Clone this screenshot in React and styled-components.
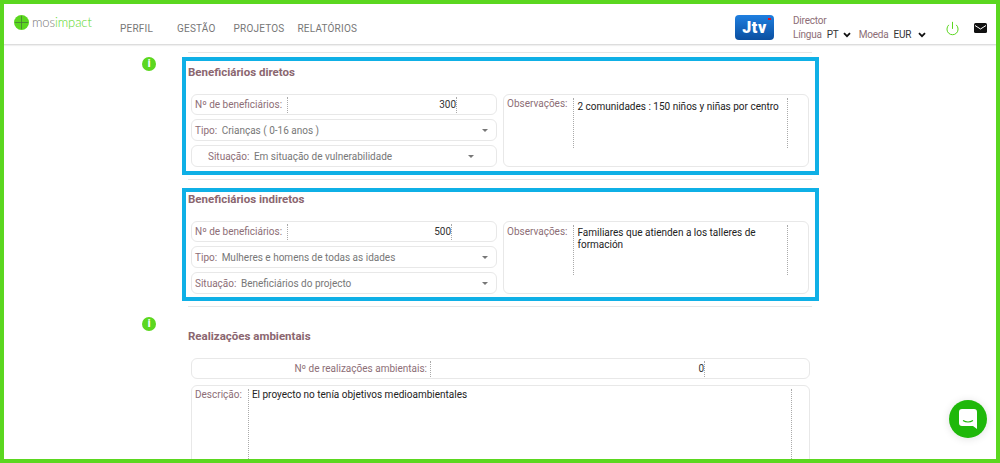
import React from "react";
import styled, { createGlobalStyle } from "styled-components";
import { Power } from "lucide-react";

const GlobalStyle = createGlobalStyle`
  html, body {
    margin: 0;
    background: #fff;
  }
  * {
    box-sizing: border-box;
  }
`;

const Frame = styled.div`
  position: relative;
  width: 1000px;
  height: 463px;
  border: 4px solid #5bd71f;
  overflow: hidden;
  font-family: Roboto, "Liberation Sans", sans-serif;
  font-size: 10px;
  color: #8d6e76;
`;

const Header = styled.header`
  display: flex;
  align-items: flex-start;
  height: 41px;
  border-bottom: 1px solid #ddd;
  box-shadow: 0 1px 1px rgba(0, 0, 0, 0.06);
`;

const Logo = styled.div`
  display: flex;
  align-items: center;
  gap: 3px;
  width: 116px;
  padding: 11px 0 0 10px;
`;

const LogoText = styled.span`
  font-family: Lato, sans-serif;
  font-weight: 300;
  font-size: 13px;
  letter-spacing: -0.1px;
  line-height: 15px;
  color: #777;
  b {
    font-weight: 300;
    color: #5bd71f;
  }
`;

const Nav = styled.nav`
  display: flex;
  padding-top: 18px;
`;

const NavItem = styled.a`
  font-size: 10px;
  line-height: 14px;
  letter-spacing: 0.2px;
  color: #777;
  margin-right: ${(p) => p.$gap}px;
`;

const Tools = styled.div`
  display: flex;
  align-items: flex-start;
  margin-left: auto;
`;

const JtvBadge = styled.div`
  position: relative;
  width: 39px;
  height: 25px;
  margin-top: 11px;
  margin-right: 19px;
  border-radius: 4px;
  background: linear-gradient(#1f7fe0, #0a4fa0);
  color: #fff;
  font-weight: 900;
  font-size: 16px;
  line-height: 26px;
  text-align: center;
  letter-spacing: 0.6px;
  &::after {
    content: "";
    position: absolute;
    top: 3px;
    right: 3px;
    width: 3px;
    height: 2px;
    background: #e01020;
  }
`;

const UserBox = styled.div`
  width: 151px;
  padding-top: 10px;
  line-height: 14px;
`;

const UserRow = styled.div`
  display: flex;
  align-items: center;
  height: 14px;
  letter-spacing: -0.2px;
`;

const Value = styled.span`
  color: #333;
  margin-left: ${(p) => p.$left}px;
`;

const Chevron = styled.svg`
  width: 8px;
  height: 6px;
  margin-left: ${(p) => p.$left}px;
  margin-right: ${(p) => p.$right || 0}px;
  fill: none;
  stroke: #111;
  stroke-width: 1.8;
`;

const PowerIcon = styled(Power)`
  width: 15px;
  height: 15px;
  margin: 17px 0 0 1px;
  color: #5bd71f;
`;

const MailIcon = styled.svg`
  width: 13px;
  height: 10px;
  margin: 18.5px 9px 0 14px;
`;

const Main = styled.main`
  padding-top: 7px;
`;

const Rule = styled.hr`
  width: 624px;
  height: 1px;
  margin: ${(p) => p.$top || 0}px 0 ${(p) => p.$bottom}px 184px;
  border: 0;
  background: #e6e6e6;
`;

const Row = styled.div`
  display: flex;
  align-items: flex-start;
  padding-left: 138px;
`;

const InfoBadge = styled.span`
  flex: none;
  width: 14px;
  height: 14px;
  margin-right: 26px;
  border-radius: 50%;
  background: #5bd71f;
  color: #fff;
  font-size: 10px;
  font-weight: 900;
  line-height: 14px;
  text-align: center;
`;

const Spacer = styled.span`
  flex: none;
  width: 40px;
`;

const Card = styled.section`
  width: 637px;
  height: ${(p) => p.$height}px;
  border: 4px solid #0fb0e6;
  padding: ${(p) => p.$pad}px 5px 0 2px;
`;

const Plain = styled.section`
  width: 637px;
  padding: 12px 5px 0 6px;
`;

const Title = styled.h3`
  margin: 0;
  font-size: 11.5px;
  line-height: 14px;
  font-weight: 700;
  color: #8b666f;
  height: ${(p) => p.$height}px;
`;

const Columns = styled.div`
  display: flex;
  gap: 6px;
  padding-left: 3px;
`;

const Stack = styled.div`
  display: flex;
  flex-direction: column;
  gap: 4px;
  width: 306px;
`;

const Field = styled.div`
  display: flex;
  align-items: center;
  height: ${(p) => p.$height || 22}px;
  padding: 0 3px;
  border: 1px solid #e8e8e8;
  border-radius: 6px;
  background: #fff;
`;

const Label = styled.span`
  white-space: nowrap;
  padding-left: ${(p) => p.$left || 0}px;
  padding-top: ${(p) => p.$top || 0}px;
`;

const NumberCell = styled.div`
  margin-left: ${(p) => p.$left}px;
  width: ${(p) => p.$width}px;
  height: 16px;
  line-height: 16px;
  text-align: right;
  color: #333;
  border-left: 1px dotted #aaa;
  border-right: 1px dotted #aaa;
`;

const SelectValue = styled.span`
  flex: 1;
  margin-left: 4.5px;
  color: #777;
  white-space: nowrap;
`;

const Caret = styled.i`
  width: 0;
  height: 0;
  margin-right: ${(p) => p.$right}px;
  border-left: 3px solid transparent;
  border-right: 3px solid transparent;
  border-top: 3px solid #777;
`;

const NoteBox = styled.div`
  display: flex;
  align-items: flex-start;
  width: 306px;
  height: 73px;
  padding: 3px 0 0 3px;
  border: 1px solid #e8e8e8;
  border-radius: 6px;
`;

const NoteText = styled.div`
  width: 215px;
  height: 50px;
  margin-left: 6px;
  padding: ${(p) => p.$top}px 0 0 3px;
  border-left: 1px dotted #aaa;
  border-right: 1px dotted #aaa;
  line-height: 12px;
  color: #222;
`;

const WideField = styled(Field)`
  width: 619px;
  margin-left: 3px;
  padding: 0;
  justify-content: flex-start;
`;

const WideLabel = styled.span`
  width: 235px;
  text-align: right;
`;

const DescBox = styled.div`
  display: flex;
  align-items: flex-start;
  width: 619px;
  height: 90px;
  margin: 6px 0 0 3px;
  padding: 3px 0 0 3px;
  border: 1px solid #e8e8e8;
  border-radius: 6px;
`;

const DescText = styled.div`
  width: 544px;
  height: 90px;
  margin-left: 6px;
  padding-left: 3px;
  border-left: 1px dotted #aaa;
  border-right: 1px dotted #aaa;
  line-height: 12px;
  color: #222;
`;

const ChatButton = styled.button`
  position: absolute;
  right: 9px;
  bottom: 21px;
  display: flex;
  align-items: center;
  justify-content: center;
  width: 38px;
  height: 38px;
  padding: 0;
  border: 0;
  border-radius: 50%;
  background: #1fb80a;
  box-shadow: 0 1px 8px rgba(0, 0, 0, 0.12);
`;

const ChevronDown = ({ left, right }) => (
  <Chevron $left={left} $right={right} viewBox="0 0 8 6">
    <path d="M1 1.2 L4 4.2 L7 1.2" />
  </Chevron>
);

const Beneficiaries = ({ title, number, numberWidth, tipo, situacao, situacaoPad, caretRight, note, noteTop, labelTop, height, pad }) => (
  <Card $height={height} $pad={pad}>
    <Title $height={29}>{title}</Title>
    <Columns>
      <Stack>
        <Field $height={21}>
          <Label>Nº de beneficiários:</Label>
          <NumberCell $left={5} $width={numberWidth}>{number}</NumberCell>
        </Field>
        <Field>
          <Label>Tipo:</Label>
          <SelectValue>{tipo}</SelectValue>
          <Caret $right={5} />
        </Field>
        <Field>
          <Label $left={situacaoPad}>Situação:</Label>
          <SelectValue>{situacao}</SelectValue>
          <Caret $right={caretRight} />
        </Field>
      </Stack>
      <NoteBox>
        <Label $top={labelTop}>Observações:</Label>
        <NoteText $top={noteTop}>{note}</NoteText>
      </NoteBox>
    </Columns>
  </Card>
);

export default function App() {
  return (
    <>
      <GlobalStyle />
      <Frame>
        <Header>
          <Logo>
            <svg width="15" height="15" viewBox="0 0 15 15">
              <circle cx="7.5" cy="7.5" r="7.5" fill="#5bd71f" />
              <path d="M7.5 1V14M1 7.5H14" stroke="#4a7a3a" strokeWidth="0.8" />
            </svg>
            <LogoText>
              mos<b>impact</b>
            </LogoText>
          </Logo>
          <Nav>
            <NavItem $gap={24}>PERFIL</NavItem>
            <NavItem $gap={18}>GESTÃO</NavItem>
            <NavItem $gap={13}>PROJETOS</NavItem>
            <NavItem $gap={0}>RELATÓRIOS</NavItem>
          </Nav>
          <Tools>
            <JtvBadge>Jtv</JtvBadge>
            <UserBox>
              <UserRow>Director</UserRow>
              <UserRow>
                Língua
                <Value $left={5}>PT</Value>
                <ChevronDown left={4} right={8} />
                Moeda
                <Value $left={5}>EUR</Value>
                <ChevronDown left={7} />
              </UserRow>
            </UserBox>
            <PowerIcon strokeWidth={1.6} />
            <MailIcon viewBox="0 0 13 10">
              <rect width="13" height="10" rx="1.5" fill="#111" />
              <path d="M1 2.5 L6.5 6 L12 2.5" fill="none" stroke="#fff" strokeWidth="1" />
            </MailIcon>
          </Tools>
        </Header>
        <Main>
          <Rule $bottom={4} />
          <Row>
            <InfoBadge>i</InfoBadge>
            <Beneficiaries
              title="Beneficiários diretos"
              number="300"
              numberWidth={170}
              tipo="Crianças ( 0-16 anos )"
              situacao="Em situação de vulnerabilidade"
              situacaoPad={13}
              caretRight={19}
              note="2 comunidades : 150 niños y niñas por centro"
              noteTop={3}
              labelTop={0}
              height={118}
              pad={4}
            />
          </Row>
          <Rule $top={4} $bottom={8} />
          <Row>
            <Spacer />
            <Beneficiaries
              title="Beneficiários indiretos"
              number="500"
              numberWidth={165}
              tipo="Mulheres e homens de todas as idades"
              situacao="Beneficiários do projecto"
              caretRight={5}
              note="Familiares que atienden a los talleres de formación"
              noteTop={2}
              labelTop={1}
              height={113}
              pad={0}
            />
          </Row>
          <Rule $top={5} $bottom={10} />
          <Row>
            <InfoBadge>i</InfoBadge>
            <Plain>
              <Title $height={29}>Realizações ambientais</Title>
              <WideField $height={21}>
                <WideLabel>Nº de realizações ambientais:</WideLabel>
                <NumberCell $left={3} $width={275}>0</NumberCell>
              </WideField>
              <DescBox>
                <Label>Descrição:</Label>
                <DescText>El proyecto no tenía objetivos medioambientales</DescText>
              </DescBox>
            </Plain>
          </Row>
        </Main>
        <ChatButton aria-label="Chat">
          <svg width="18" height="20" viewBox="0 0 18 20">
            <path d="M3 0H15A3 3 0 0 1 18 3V20L14 17H3A3 3 0 0 1 0 14V3A3 3 0 0 1 3 0Z" fill="#fff" />
            <path d="M4 11.5Q9 14.5 14 11.5" fill="none" stroke="#1fb80a" strokeWidth="1.2" />
          </svg>
        </ChatButton>
      </Frame>
    </>
  );
}
